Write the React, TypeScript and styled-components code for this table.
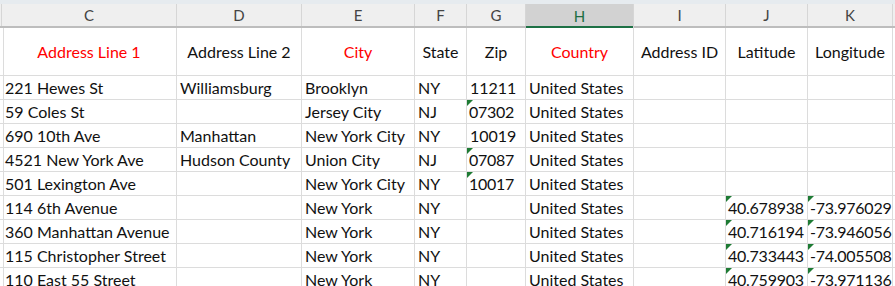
import styled, { createGlobalStyle } from "styled-components";

const GlobalStyle = createGlobalStyle`
    html, body {
        margin: 0;
        padding: 0;
        background: #ffffff;
        overflow: hidden;
    }
`;

const COLUMNS = [
    { letter: "", width: 2 },
    { letter: "C", width: 175 },
    { letter: "D", width: 125 },
    { letter: "E", width: 113 },
    { letter: "F", width: 52 },
    { letter: "G", width: 59 },
    { letter: "H", width: 108 },
    { letter: "I", width: 92 },
    { letter: "J", width: 82 },
    { letter: "K", width: 85 },
    { letter: "", width: 40 },
];

const TEMPLATE = COLUMNS.map((c) => `${c.width}px`).join(" ");

const HEADERS = [
    { label: "Address Line 1", required: true },
    { label: "Address Line 2" },
    { label: "City", required: true },
    { label: "State" },
    { label: "Zip" },
    { label: "Country", required: true },
    { label: "Address ID" },
    { label: "Latitude" },
    { label: "Longitude" },
];

type Cell = string | { text: string; flag: true };
const t = (text: string): Cell => ({ text, flag: true });

const ROWS: Cell[][] = [
    ["221 Hewes St", "Williamsburg", "Brooklyn", "NY", "11211", "United States", "", "", ""],
    ["59 Coles St", "", "Jersey City", "NJ", t("07302"), "United States", "", "", ""],
    ["690 10th Ave", "Manhattan", "New York City", "NY", "10019", "United States", "", "", ""],
    ["4521 New York Ave", "Hudson County", "Union City", "NJ", t("07087"), "United States", "", "", ""],
    ["501 Lexington Ave", "", "New York City", "NY", t("10017"), "United States", "", "", ""],
    ["114 6th Avenue", "", "New York", "NY", "", "United States", "", t("40.678938"), t("-73.976029")],
    ["360 Manhattan Avenue", "", "New York", "NY", "", "United States", "", t("40.716194"), t("-73.946056")],
    ["115 Christopher Street", "", "New York", "NY", "", "United States", "", t("40.733443"), t("-74.005508")],
    ["110 East 55 Street", "", "New York", "NY", "", "United States", "", t("40.759903"), t("-73.971136")],
];

export default function App() {
    return (
        <>
            <GlobalStyle />
            <SSheet>
                <STopStrip />
                <SColumnBar>
                    {COLUMNS.map((c, i) => (
                        <SColumnLetter key={i} $active={c.letter === "H"}>
                            {c.letter}
                        </SColumnLetter>
                    ))}
                </SColumnBar>
                <SRow $tall>
                    <SCell />
                    {HEADERS.map((h) => (
                        <SHeaderCell key={h.label} $required={h.required}>
                            {h.label}
                        </SHeaderCell>
                    ))}
                    <SCell />
                </SRow>
                {ROWS.map((row, r) => (
                    <SRow key={r}>
                        <SCell />
                        {row.map((cell, c) =>
                            typeof cell === "string" ? (
                                <SCell key={c}>{cell}</SCell>
                            ) : (
                                <SNumberCell key={c}>
                                    <SFlag />
                                    {cell.text}
                                </SNumberCell>
                            )
                        )}
                        <SCell />
                    </SRow>
                ))}
            </SSheet>
        </>
    );
}

const SSheet = styled.div`
    width: 895px;
    height: 286px;
    overflow: hidden;
    font-family: "Lato", "Liberation Sans", sans-serif;
    font-size: 16px;
    color: #111111;
`;

const STopStrip = styled.div`
    height: 4px;
    background: #e6ebef;
`;

const SColumnBar = styled.div`
    display: grid;
    grid-template-columns: ${TEMPLATE};
    height: 22px;
    background: #efefef;
    border-bottom: 2px solid #bdbdbd;
`;

const SColumnLetter = styled.div<{ $active?: boolean }>`
    display: flex;
    align-items: center;
    justify-content: center;
    border-right: 1px solid #d6d6d6;
    color: ${({ $active }) => ($active ? "#1e6e42" : "#444444")};
    background: ${({ $active }) => ($active ? "#d2d2d2" : "transparent")};
    box-shadow: ${({ $active }) => ($active ? "inset 0 -2px 0 #1e7145" : "none")};
    margin-bottom: ${({ $active }) => ($active ? "-2px" : "0")};
    font-size: 15px;
`;

const SRow = styled.div<{ $tall?: boolean }>`
    display: grid;
    grid-template-columns: ${TEMPLATE};
    height: ${({ $tall }) => ($tall ? "48px" : "24px")};
`;

const SCell = styled.div`
    position: relative;
    display: flex;
    align-items: center;
    padding-left: 3px;
    border-right: 1px solid #dcdcdc;
    border-bottom: 1px solid #dcdcdc;
    white-space: nowrap;
    overflow: hidden;
`;

const SNumberCell = styled(SCell)`
    padding-left: 2px;
    letter-spacing: -0.25px;
`;

const SHeaderCell = styled(SCell)<{ $required?: boolean }>`
    justify-content: center;
    padding-left: 0;
    color: ${({ $required }) => ($required ? "#ff0000" : "#111111")};
`;

const SFlag = styled.span`
    position: absolute;
    top: 0;
    left: 0;
    width: 0;
    height: 0;
    border-top: 6px solid #1e7b34;
    border-right: 6px solid transparent;
`;
